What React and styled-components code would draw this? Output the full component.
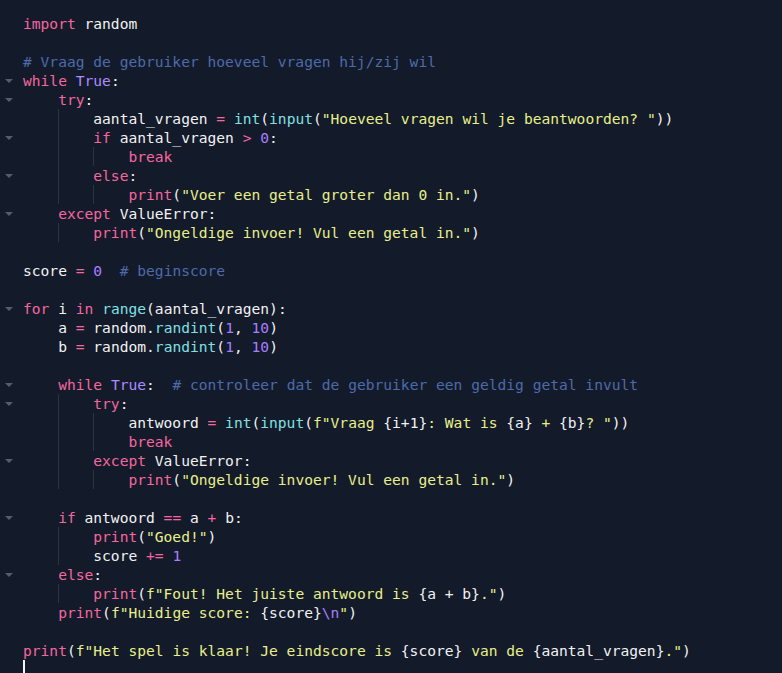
import React from 'react';
import styled, { createGlobalStyle } from 'styled-components';

const GlobalStyle = createGlobalStyle`
  html, body {
    margin: 0;
    padding: 0;
    height: 100%;
    overflow: hidden;
    background: #131a2a;
  }
`;

const Editor = styled.div`
  height: 673px;
  box-sizing: border-box;
  padding-top: 14px;
  background: #131a2a;
  font-family: "DejaVu Sans Mono", "Liberation Mono", monospace;
  font-size: 14.6px;
  color: #f2f2f2;
  overflow: hidden;
`;

const Row = styled.div`
  display: flex;
  align-items: center;
  height: 19px;
  line-height: 19px;
  white-space: pre;
`;

const Gutter = styled.div`
  width: 23px;
  flex: none;
  display: flex;
  align-items: center;
  padding-left: 5px;
  box-sizing: border-box;
`;

const Fold = styled.span`
  width: 0;
  height: 0;
  border-left: 4px solid transparent;
  border-right: 4px solid transparent;
  border-top: 4px solid #555c6b;
  margin-top: 1px;
`;

const Code = styled.div`
  display: flex;
  align-items: stretch;
  height: 19px;
`;

const Indent = styled.span`
  display: inline-block;
  width: 4ch;
  height: 19px;
  box-sizing: border-box;
  border-left: ${(p) => (p.$guide ? '1px solid #2c3342' : 'none')};
`;

const colors = {
  kw: '#f6679f',
  const: '#ad8cff',
  builtin: '#82e0e3',
  str: '#e8ef8a',
  comment: '#4d6aaa',
  num: '#a97eff',
  op: '#f6679f',
  plain: '#f2f2f2',
};

const Tok = styled.span`
  color: ${(p) => colors[p.$kind]};
`;

const Cursor = styled.span`
  display: inline-block;
  width: 2px;
  height: 16px;
  background: #f5f5f5;
  align-self: center;
  margin-top: -4px;
`;

const source = `import random

# Vraag de gebruiker hoeveel vragen hij/zij wil
while True:
    try:
        aantal_vragen = int(input("Hoeveel vragen wil je beantwoorden? "))
        if aantal_vragen > 0:
            break
        else:
            print("Voer een getal groter dan 0 in.")
    except ValueError:
        print("Ongeldige invoer! Vul een getal in.")

score = 0  # beginscore

for i in range(aantal_vragen):
    a = random.randint(1, 10)
    b = random.randint(1, 10)

    while True:  # controleer dat de gebruiker een geldig getal invult
        try:
            antwoord = int(input(f"Vraag {i+1}: Wat is {a} + {b}? "))
            break
        except ValueError:
            print("Ongeldige invoer! Vul een getal in.")

    if antwoord == a + b:
        print("Goed!")
        score += 1
    else:
        print(f"Fout! Het juiste antwoord is {a + b}.")
    print(f"Huidige score: {score}\\n")

print(f"Het spel is klaar! Je eindscore is {score} van de {aantal_vragen}.")
`;

const keywords = new Set(['import', 'while', 'try', 'if', 'else', 'except', 'for', 'in', 'break', 'print']);
const builtins = new Set(['int', 'input', 'range', 'randint']);
const folds = new Set([4, 5, 7, 9, 11, 16, 20, 21, 24, 27, 30]);

function splitString(text) {
  // f-string: interpolations in plain colour, escapes in purple
  const out = [];
  const re = /(\{[^}]*\})|(\\n)|([^{\\]+)/g;
  let m;
  while ((m = re.exec(text))) {
    if (m[1]) out.push(['plain', m[1]]);
    else if (m[2]) out.push(['num', m[2]]);
    else out.push(['str', m[3]]);
  }
  return out;
}

function tokenize(line) {
  const out = [];
  const re = /(#.*$)|(f?"(?:[^"\\]|\\.)*")|(\d+)|([A-Za-z_]\w*)|(==|\+=|[=+><-])|(\s+)|(.)/g;
  let m;
  while ((m = re.exec(line))) {
    if (m[1]) out.push(['comment', m[1]]);
    else if (m[2]) out.push(...splitString(m[2]));
    else if (m[3]) out.push(['num', m[3]]);
    else if (m[4]) {
      const w = m[4];
      if (keywords.has(w)) out.push(['kw', w]);
      else if (w === 'True') out.push(['const', w]);
      else if (builtins.has(w)) out.push(['builtin', w]);
      else out.push(['plain', w]);
    } else if (m[5]) out.push(['op', m[5]]);
    else out.push(['plain', m[0]]);
  }
  return out;
}

function CodeLine({ text, number, last }) {
  const lead = text.match(/^ */)[0].length;
  const levels = Math.floor(lead / 4);
  const body = text.slice(levels * 4);
  return (
    <Row>
      <Gutter>{folds.has(number) && <Fold />}</Gutter>
      <Code>
        {Array.from({ length: levels }, (_, i) => (
          <Indent key={i} $guide={i > 0} />
        ))}
        {tokenize(body).map(([kind, t], i) => (
          <Tok key={i} $kind={kind}>{t}</Tok>
        ))}
        {last && <Cursor />}
      </Code>
    </Row>
  );
}

export default function App() {
  const lines = source.split('\n');
  return (
    <>
      <GlobalStyle />
      <Editor>
        {lines.map((l, i) => (
          <CodeLine key={i} text={l} number={i + 1} last={i === lines.length - 1} />
        ))}
      </Editor>
    </>
  );
}
